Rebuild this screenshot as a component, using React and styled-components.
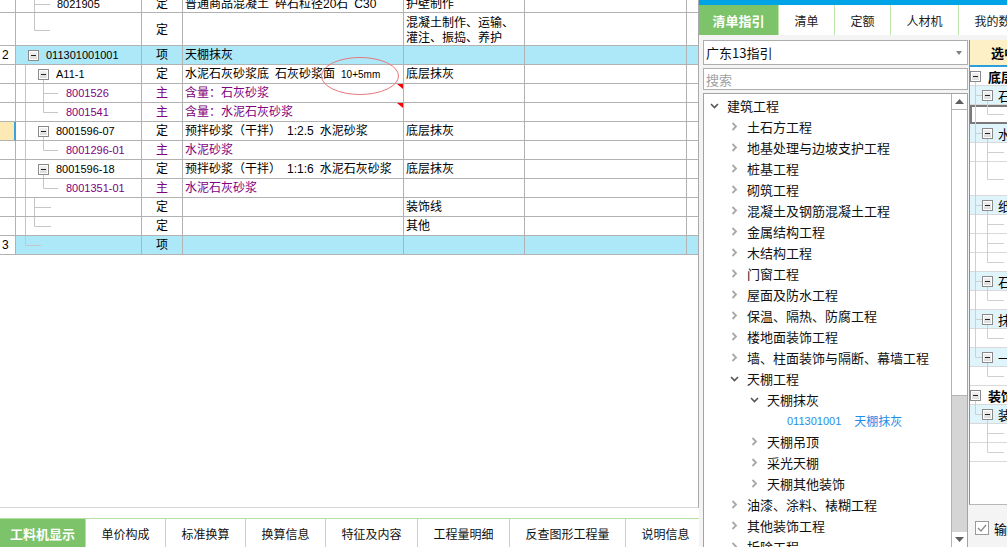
import React from 'react';
import styled, { createGlobalStyle } from 'styled-components';

const GlobalStyle = createGlobalStyle`
  html, body { margin: 0; padding: 0; background: #fff; }
  body {
    font-family: "Liberation Sans", "Noto Sans CJK SC", sans-serif;
    font-size: 12px;
    color: #000;
  }
`;

const COLS = '16px 126px 41px 221px 121px 162px 11px';
const GRID = '#b2b2b2';
const TREE = '#c6c6c6';
const PURPLE = '#800080';
const SP = '\u2002';

const V9 = [9.5, 0, 9.5, 19];
const leafMid = [[27.5, 0, 27.5, 19], [27.5, 9.5, 42, 9.5]];
const leafEnd = [[27.5, 0, 27.5, 9.5], [27.5, 9.5, 42, 9.5]];
const boxDown = [27.5, 15, 27.5, 19];

const Small = styled.span`
  font-family: "Liberation Sans", sans-serif;
  font-size: 10px;
`;

const rows = [
  { h: 19, pt: 3, cx: 41, code: '8021905', type: '定', name: `普通商品混凝土${SP}碎石粒径20石${SP}C30`, feat: '护壁制作',
    segs: [[18.5, 0, 18.5, 19], [18.5, 10.5, 34, 10.5]] },
  { h: 33, pt: 3, type: '定', feat: '混凝土制作、运输、\n灌注、振捣、养护',
    segs: [[18.5, 0, 18.5, 17.5], [18.5, 17.5, 34, 17.5]] },
  { num: '2', blue: true, box: true, cx: 12, code: '011301001001', type: '项', name: '天棚抹灰' },
  { box: true, cx: 22, code: 'A11-1', type: '定', ellipse: true, feat: '底层抹灰',
    name: <>水泥石灰砂浆底{SP}石灰砂浆面{SP}<Small>10+5mm</Small></>, segs: [V9, boxDown] },
  { cx: 50, code: '8001526', purple: true, type: '主', name: '含量：石灰砂浆', corner: true, segs: [V9, ...leafMid] },
  { cx: 50, code: '8001541', purple: true, type: '主', name: '含量：水泥石灰砂浆', corner: true, segs: [V9, ...leafEnd] },
  { current: true, box: true, cx: 22, code: '8001596-07', type: '定', name: `预拌砂浆（干拌）${SP}1:2.5${SP}水泥砂浆`, feat: '底层抹灰', segs: [V9, boxDown] },
  { cx: 50, code: '8001296-01', purple: true, type: '主', name: '水泥砂浆', segs: [V9, ...leafEnd] },
  { box: true, cx: 22, code: '8001596-18', type: '定', name: `预拌砂浆（干拌）${SP}1:1:6${SP}水泥石灰砂浆`, feat: '底层抹灰', segs: [V9, boxDown] },
  { cx: 50, code: '8001351-01', purple: true, type: '主', name: '水泥石灰砂浆', segs: [V9, ...leafEnd] },
  { type: '定', feat: '装饰线', segs: [V9, [18.5, 0, 18.5, 19], [18.5, 9.5, 35, 9.5]] },
  { type: '定', feat: '其他', segs: [V9, [18.5, 0, 18.5, 9.5], [18.5, 9.5, 35, 9.5]] },
  { num: '3', blue: true, type: '项', segs: [[9.5, 0, 9.5, 9.5], [9.5, 9.5, 25, 9.5]] },
];

const bottomTabs = ['工料机显示', '单价构成', '标准换算', '换算信息', '特征及内容', '工程量明细', '反查图形工程量', '说明信息'];
const rightTabs = ['清单指引', '清单', '定额', '人材机', '我的数据'];

const tree = [
  { lv: 0, open: true, text: '建筑工程' },
  { lv: 1, text: '土石方工程' },
  { lv: 1, text: '地基处理与边坡支护工程' },
  { lv: 1, text: '桩基工程' },
  { lv: 1, text: '砌筑工程' },
  { lv: 1, text: '混凝土及钢筋混凝土工程' },
  { lv: 1, text: '金属结构工程' },
  { lv: 1, text: '木结构工程' },
  { lv: 1, text: '门窗工程' },
  { lv: 1, text: '屋面及防水工程' },
  { lv: 1, text: '保温、隔热、防腐工程' },
  { lv: 1, text: '楼地面装饰工程' },
  { lv: 1, text: '墙、柱面装饰与隔断、幕墙工程' },
  { lv: 1, open: true, text: '天棚工程' },
  { lv: 2, open: true, text: '天棚抹灰' },
  { lv: 3, leaf: true, code: '011301001', text: '天棚抹灰' },
  { lv: 2, text: '天棚吊顶' },
  { lv: 2, text: '采光天棚' },
  { lv: 2, text: '天棚其他装饰' },
  { lv: 1, text: '油漆、涂料、裱糊工程' },
  { lv: 1, text: '其他装饰工程' },
  { lv: 1, text: '拆除工程' },
];

const l2Segs = (last) => [last ? [5.5, 0, 5.5, 9.5] : [5.5, 0, 5.5, 19], [5.5, 9.5, 12, 9.5], [17.5, 15, 17.5, 19]];
const leafSegs = (end, trunk, h = 19) => {
  const c = Math.floor(h / 2) + 0.5;
  return [...(trunk ? [[5.5, 0, 5.5, h]] : []), [17.5, 0, 17.5, end ? c : h], [17.5, c, 34, c]];
};

const picked = [
  { k: 'l1', text: '底层抹灰', segs: [[5.5, 15, 5.5, 19]] },
  { k: 'l2', text: '石灰砂浆', segs: l2Segs(false) },
  { k: 'sel', segs: leafSegs(true, true) },
  { k: 'l2', text: '水泥砂浆', segs: l2Segs(false) },
  { k: 'leaf', segs: leafSegs(false, true) },
  { k: 'leaf', h: 34, segs: leafSegs(true, true, 34) },
  { k: 'l2', text: '纸筋灰浆', segs: l2Segs(false) },
  { k: 'leaf', segs: leafSegs(false, true) },
  { k: 'leaf', segs: leafSegs(false, true) },
  { k: 'leaf', segs: leafSegs(true, true) },
  { k: 'l2', text: '石膏砂浆', segs: l2Segs(false) },
  { k: 'leaf', segs: leafSegs(true, true) },
  { k: 'l2', text: '抹灰面层', segs: l2Segs(false) },
  { k: 'leaf', segs: leafSegs(true, true) },
  { k: 'l2', text: '一般抹灰', segs: l2Segs(true) },
  { k: 'leaf', segs: leafSegs(true, false) },
  { k: 'l1', text: '装饰线', segs: [[5.5, 15, 5.5, 19]] },
  { k: 'l2', text: '装饰线条', segs: l2Segs(true) },
  { k: 'leaf', segs: leafSegs(false, false) },
  { k: 'leaf', segs: leafSegs(true, false) },
];

/* ---------- layout ---------- */

const Screen = styled.div`
  width: 1007px;
  height: 547px;
  display: flex;
  overflow: hidden;
`;

const LeftPane = styled.div`
  width: 699px;
  flex-shrink: 0;
  display: flex;
  flex-direction: column;
`;

const GridArea = styled.div`
  flex: 1;
  overflow: hidden;
  border-right: 1px solid #a9a9a9;
  border-bottom: 1px solid #d6d6d6;
`;

const Table = styled.div`
  margin-top: -6px;
`;

const Row = styled.div`
  display: grid;
  grid-template-columns: ${COLS};
  height: ${(p) => p.$h}px;
`;

const Cell = styled.div`
  position: relative;
  display: flex;
  align-items: center;
  justify-content: ${(p) => (p.$center ? 'center' : 'flex-start')};
  padding-left: ${(p) => p.$pad || 0}px;
  padding-top: ${(p) => p.$pt || 0}px;
  border-right: ${(p) => (p.$last ? 'none' : `1px solid ${GRID}`)};
  border-bottom: 1px solid ${GRID};
  background: ${(p) => (p.$blue ? '#ade8f8' : '#fff')};
  color: ${(p) => (p.$purple ? PURPLE : '#000')};
  font-family: "Liberation Sans", "Noto Sans CJK SC", sans-serif;
  font-size: 12px;
  line-height: 15px;
  white-space: pre;
  overflow: ${(p) => (p.$open ? 'visible' : 'hidden')};
`;

const NumCell = styled(Cell)`
  padding-left: 2px;
  background: ${(p) => (p.$current ? '#fde9b4' : '#fff')};
  border-right: ${(p) => (p.$current ? '2px solid #3aa3dc' : `1px solid ${GRID}`)};
`;

const LineSvg = styled.svg`
  position: absolute;
  left: 0;
  top: 0;
  pointer-events: none;
`;

const CodeInner = styled.div`
  position: relative;
  display: flex;
  align-items: center;
  gap: 7px;
  padding-left: ${(p) => p.$x}px;
  font-family: "Liberation Sans", sans-serif;
  font-size: 11px;
`;

const MinusBox = styled.span`
  position: relative;
  width: 11px;
  height: 11px;
  box-sizing: border-box;
  border: 1px solid #8a8a8a;
  box-shadow: inset 0 0 0 1px #fff;
  background: linear-gradient(#f4f4f4, #d9d9d9);
  display: flex;
  align-items: center;
  justify-content: center;
  flex-shrink: 0;
  &::after {
    content: '';
    width: 5px;
    height: 1px;
    background: #222;
  }
`;

const Corner = styled.span`
  position: absolute;
  top: 0;
  right: 0;
  border-top: 5px solid #f00;
  border-left: 6px solid transparent;
`;

const Ellipse = styled.svg`
  position: absolute;
  left: 137px;
  top: -9px;
  z-index: 3;
  overflow: visible;
  pointer-events: none;
`;

const Lines = ({ segs, w, h, color = TREE }) => (
  <LineSvg width={w} height={h}>
    {segs.map(([x1, y1, x2, y2], i) => (
      <line key={i} x1={x1} y1={y1} x2={x2} y2={y2} stroke={color} strokeWidth="1" />
    ))}
  </LineSvg>
);

const GridRow = ({ row }) => {
  const h = row.h || 19;
  const pt = row.pt || 0;
  return (
    <Row $h={h}>
      <NumCell $current={row.current} $pt={pt}>{row.num}</NumCell>
      <Cell $blue={row.blue}>
        {row.segs && <Lines segs={row.segs} w={126} h={h} />}
        {row.code && (
          <CodeInner $x={row.cx} style={{ color: row.purple ? PURPLE : '#000', top: pt / 2 }}>
            {row.box && <MinusBox />}
            {row.code}
          </CodeInner>
        )}
      </Cell>
      <Cell $blue={row.blue} $center $purple={row.purple} $pt={pt}>{row.type}</Cell>
      <Cell $blue={row.blue} $pad={2} $pt={pt} $purple={row.purple} $open={row.ellipse}>
        {row.name}
        {row.corner && <Corner />}
        {row.ellipse && (
          <Ellipse width="80" height="40">
            <ellipse cx="40" cy="20" rx="38.5" ry="18.5" fill="none" stroke="#e8777a" strokeWidth="1" />
          </Ellipse>
        )}
      </Cell>
      <Cell $blue={row.blue} $pad={2} $pt={pt}>{row.feat}</Cell>
      <Cell $blue={row.blue} />
      <Cell $blue={row.blue} $last />
    </Row>
  );
};

const Gap = styled.div`
  height: 10px;
`;

const TabBar = styled.div`
  height: 29px;
  box-sizing: border-box;
  display: flex;
  border-top: 1px solid #b3e1a1;
`;

const BottomTab = styled.div`
  display: flex;
  align-items: center;
  flex-shrink: 0;
  padding: 0 ${(p) => (p.$active ? '10px' : '15.5px')};
  border-right: 1px solid #b3e1a1;
  background: ${(p) => (p.$active ? '#7cc36a' : '#fff')};
  color: ${(p) => (p.$active ? '#fff' : '#111')};
  font-family: "Noto Sans CJK SC", sans-serif;
  font-size: ${(p) => (p.$active ? 13 : 12)}px;
  font-weight: ${(p) => (p.$active ? 700 : 400)};
  white-space: nowrap;
`;

/* ---------- right pane ---------- */

const RightPane = styled.div`
  width: 308px;
  flex-shrink: 0;
  display: flex;
  flex-direction: column;
  overflow: hidden;
  background: #f4f4f4;
`;

const TopStrip = styled.div`
  height: 5px;
  background: #00a3e6;
`;

const RTabBar = styled.div`
  height: 30px;
  display: flex;
  background: #fff;
`;

const RTab = styled.div`
  display: flex;
  align-items: center;
  flex-shrink: 0;
  padding: 0 ${(p) => (p.$active ? '13.5px' : '15.5px')};
  border-right: 1px solid #bce5ab;
  background: ${(p) => (p.$active ? '#7cc36a' : '#fff')};
  color: ${(p) => (p.$active ? '#fff' : '#1a1a1a')};
  font-family: "Noto Sans CJK SC", sans-serif;
  font-size: ${(p) => (p.$active ? 13 : 12)}px;
  font-weight: ${(p) => (p.$active ? 700 : 400)};
  white-space: nowrap;
`;

const RBody = styled.div`
  flex: 1;
  min-height: 0;
  display: flex;
  gap: 1px;
  padding: 5px 0 0 4px;
`;

const GuideCol = styled.div`
  width: 265px;
  flex-shrink: 0;
  display: flex;
  flex-direction: column;
  gap: 3px;
`;

const Select = styled.div`
  height: 25px;
  box-sizing: border-box;
  border: 1px solid #adadad;
  background: #fff;
  display: flex;
  align-items: center;
  justify-content: space-between;
  padding: 0 5px 0 2px;
  font-family: "Noto Sans CJK SC", sans-serif;
  font-size: 13px;
  color: #111;
`;

const Caret = styled.span`
  border-top: 4px solid #808080;
  border-left: 3px solid transparent;
  border-right: 3px solid transparent;
`;

const Search = styled.input`
  height: 22px;
  box-sizing: border-box;
  border: 1px solid #adadad;
  padding: 0 2px;
  margin: 0;
  outline: none;
  background: #fff;
  font-family: "Noto Sans CJK SC", sans-serif;
  font-size: 13px;
  &::placeholder { color: #a0a0a0; }
`;

const TreeBox = styled.div`
  flex: 1;
  min-height: 0;
  display: flex;
  border: 1px solid #a3a3a3;
  border-bottom: none;
  background: #fff;
`;

const TreeList = styled.div`
  flex: 1;
  padding-top: 1px;
  overflow: hidden;
`;

const TreeRow = styled.div`
  height: 21px;
  display: flex;
  align-items: center;
  padding-left: ${(p) => 6 + p.$lv * 20}px;
  font-family: "Noto Sans CJK SC", sans-serif;
  font-size: 13px;
  color: #111;
  white-space: nowrap;
`;

const Chev = styled.span`
  width: 17px;
  display: flex;
  align-items: center;
  flex-shrink: 0;
`;

const LeafRow = styled(TreeRow)`
  gap: 13px;
  padding-left: 83px;
  color: #1f8ee6;
  font-size: 12px;
`;

const LeafCode = styled.span`
  font-family: "Liberation Sans", sans-serif;
  font-size: 11px;
`;

const VScroll = styled.div`
  width: 15px;
  flex-shrink: 0;
  display: flex;
  flex-direction: column;
  border-left: 1px solid #b4b4b4;
`;

const ScrollBtn = styled.div`
  height: 15px;
  flex-shrink: 0;
  display: flex;
  align-items: center;
  justify-content: center;
  background: #fff;
`;

const Thumb = styled.div`
  height: 287px;
  flex-shrink: 0;
  box-sizing: border-box;
  border-top: 1px solid #b4b4b4;
  border-bottom: 1px solid #b4b4b4;
  background: #fff;
`;

const Track = styled.div`
  flex: 1;
  background: #d5d5d5;
`;

const Panel = styled.div`
  width: 240px;
  flex-shrink: 0;
  display: flex;
  flex-direction: column;
`;

const PanelBox = styled.div`
  flex: 1;
  display: flex;
  flex-direction: column;
  background: #fff;
  border-left: 1px solid #8e8e8e;
  border-bottom: 1px solid #b8b8b8;
`;

const PanelHead = styled.div`
  height: 25px;
  display: flex;
  align-items: center;
  padding-left: 21px;
  background: #fdefc6;
  border-bottom: 2px solid #2b9fdb;
  font-family: "Noto Sans CJK SC", sans-serif;
  font-size: 13px;
  font-weight: 700;
`;

const PRow = styled.div`
  position: relative;
  height: ${(p) => p.$h}px;
  box-sizing: border-box;
  display: flex;
  align-items: center;
  gap: ${(p) => (p.$k === 'l1' ? 7 : 5)}px;
  padding-left: ${(p) => (p.$k === 'l2' ? 12 : 0)}px;
  border-bottom: 1px solid #d9d9d9;
  background: ${(p) => (p.$k === 'l2' ? '#e0f4fc' : '#fff')};
  outline: ${(p) => (p.$k === 'sel' ? '2px solid #7a7a7a' : 'none')};
  outline-offset: -2px;
  font-family: "Noto Sans CJK SC", sans-serif;
  font-size: 13px;
  font-weight: ${(p) => (p.$k === 'l1' ? 700 : 400)};
  white-space: nowrap;
  & > span { position: relative; }
`;

const PanelFill = styled.div`
  flex: 1;
`;

const PanelFoot = styled.div`
  height: 42px;
  display: flex;
  align-items: center;
  gap: 5px;
  padding: 4px 0 0 6px;
  box-sizing: border-box;
  font-family: "Noto Sans CJK SC", sans-serif;
  font-size: 13px;
  white-space: nowrap;
`;

const Check = styled.span`
  width: 14px;
  height: 14px;
  box-sizing: border-box;
  border: 1px solid #9a9a9a;
  background: #fff;
  display: flex;
  align-items: center;
  justify-content: center;
`;

const ChevronDown = ({ color = '#555' }) => (
  <svg width="9" height="9" viewBox="0 0 9 9">
    <polyline points="1,3 4.5,6.5 8,3" fill="none" stroke={color} strokeWidth="1.6" />
  </svg>
);

const ChevronRight = () => (
  <svg width="9" height="9" viewBox="0 0 9 9">
    <polyline points="2.5,1 6,4.5 2.5,8" fill="none" stroke="#a8a8a8" strokeWidth="1.8" />
  </svg>
);

const Tri = ({ up }) => (
  <svg width="9" height="5" viewBox="0 0 9 5">
    <polygon points={up ? '0,5 4.5,0 9,5' : '0,0 9,0 4.5,5'} fill="#5f5f5f" />
  </svg>
);

const App = () => (
  <>
    <GlobalStyle />
    <Screen>
      <LeftPane>
        <GridArea>
          <Table>
            {rows.map((r, i) => (
              <GridRow key={i} row={r} />
            ))}
          </Table>
        </GridArea>
        <Gap />
        <TabBar>
          {bottomTabs.map((t, i) => (
            <BottomTab key={t} $active={i === 0}>{t}</BottomTab>
          ))}
        </TabBar>
      </LeftPane>

      <RightPane>
        <TopStrip />
        <RTabBar>
          {rightTabs.map((t, i) => (
            <RTab key={t} $active={i === 0}>{t}</RTab>
          ))}
        </RTabBar>
        <RBody>
          <GuideCol>
            <Select>
              <span>广东13指引</span>
              <Caret />
            </Select>
            <Search placeholder="搜索" readOnly />
            <TreeBox>
              <TreeList>
                {tree.map((n, i) =>
                  n.leaf ? (
                    <LeafRow key={i} $lv={n.lv}>
                      <LeafCode>{n.code}</LeafCode>
                      <span>{n.text}</span>
                    </LeafRow>
                  ) : (
                    <TreeRow key={i} $lv={n.lv}>
                      <Chev>{n.open ? <ChevronDown /> : <ChevronRight />}</Chev>
                      {n.text}
                    </TreeRow>
                  )
                )}
              </TreeList>
              <VScroll>
                <ScrollBtn><Tri up /></ScrollBtn>
                <Thumb />
                <Track />
                <ScrollBtn><Tri /></ScrollBtn>
              </VScroll>
            </TreeBox>
          </GuideCol>

          <Panel>
            <PanelBox>
              <PanelHead>选中清单</PanelHead>
              {picked.map((p, i) => {
                const h = p.h || 19;
                return (
                  <PRow key={i} $k={p.k} $h={h}>
                    <Lines segs={p.segs} w={60} h={h} color="#cfcfcf" />
                    {(p.k === 'l1' || p.k === 'l2') && <MinusBox />}
                    {p.text && <span>{p.text}</span>}
                  </PRow>
                );
              })}
              <PanelFill />
            </PanelBox>
            <PanelFoot>
              <Check>
                <svg width="10" height="8" viewBox="0 0 10 8">
                  <polyline points="1,4 4,7 9,1" fill="none" stroke="#8a8a8a" strokeWidth="1.3" />
                </svg>
              </Check>
              <span>输出选中项</span>
            </PanelFoot>
          </Panel>
        </RBody>
      </RightPane>
    </Screen>
  </>
);

export default App;
